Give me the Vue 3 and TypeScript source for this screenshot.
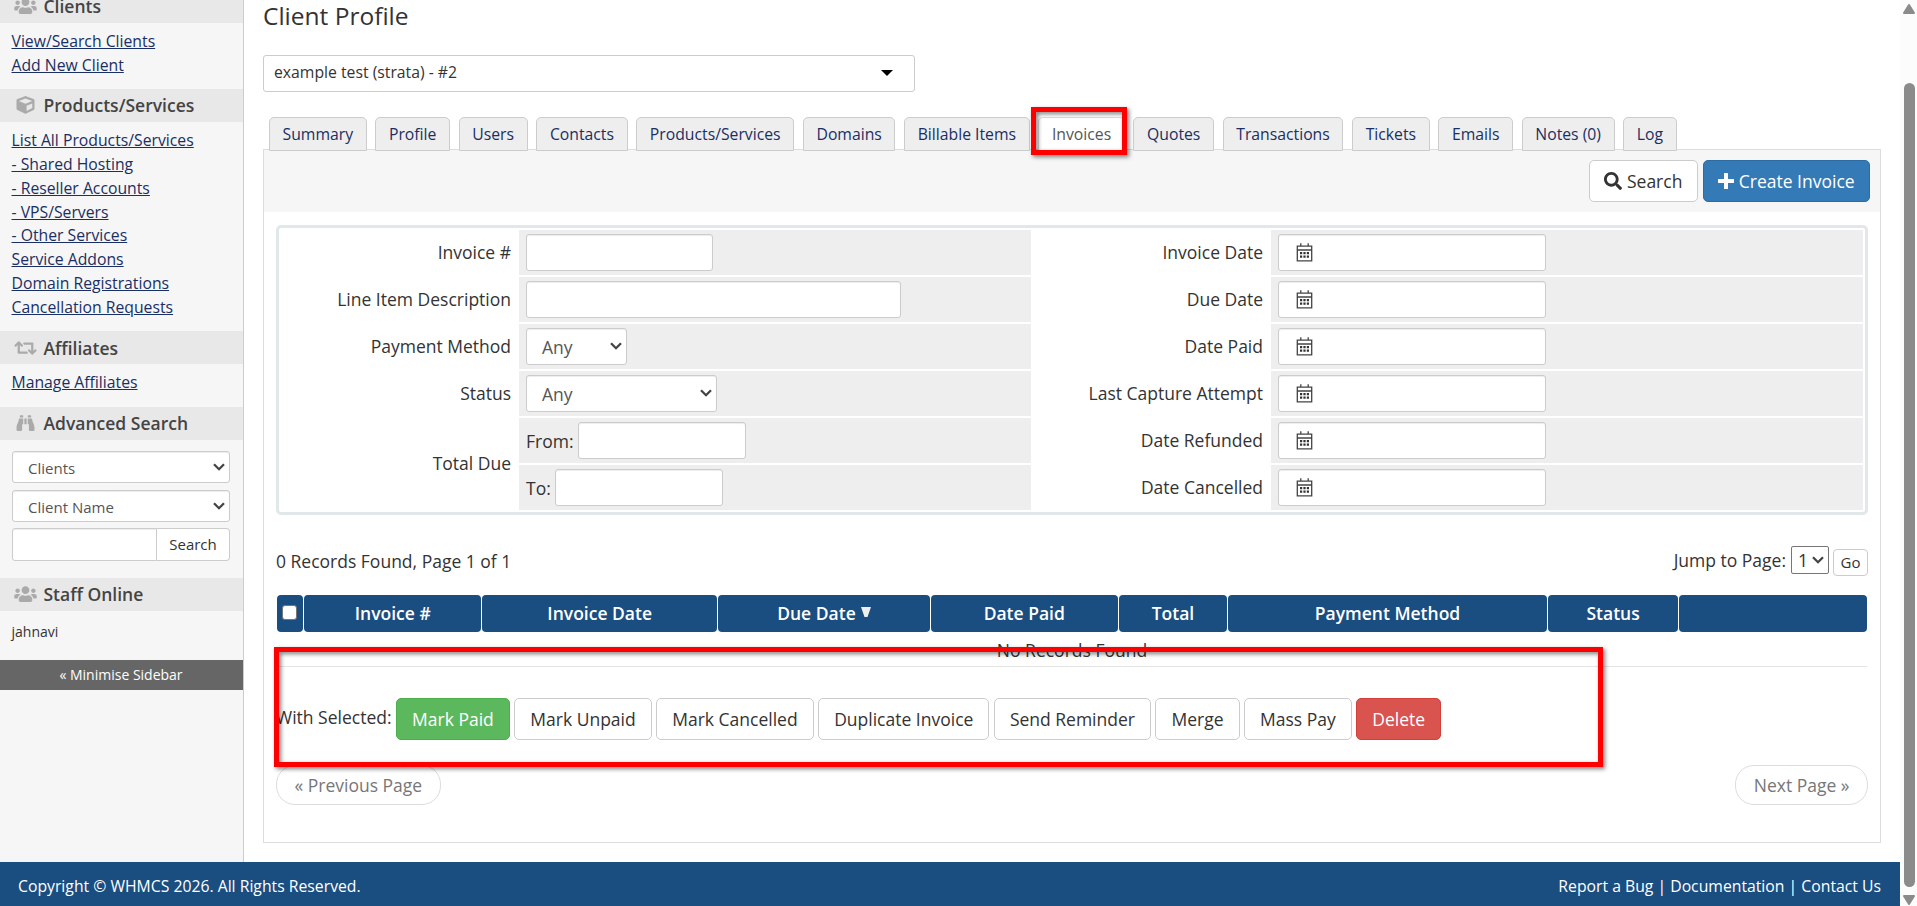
<script setup lang="ts">
interface NavSection {
  title: string
  icon: 'users' | 'cube' | 'retweet' | 'binoculars'
  links: string[]
}

interface Column {
  label: string
  sorted?: boolean
}

interface ActionButton {
  label: string
  kind: 'default' | 'success' | 'danger'
}

const icons: Record<NavSection['icon'], { box: string; d: string }> = {
  users: {
    box: '0 0 640 512',
    d: 'M96 224c35.3 0 64-28.7 64-64s-28.7-64-64-64-64 28.7-64 64 28.7 64 64 64zm448 0c35.3 0 64-28.7 64-64s-28.7-64-64-64-64 28.7-64 64 28.7 64 64 64zm32 32h-64c-17.6 0-33.5 7.1-45.1 18.6 40.3 22.1 68.9 62 75.1 109.4h66c17.7 0 32-14.3 32-32v-32c0-35.3-28.7-64-64-64zm-256 0c61.9 0 112-50.1 112-112S381.9 32 320 32 208 82.1 208 144s50.1 112 112 112zm76.8 32h-8.3c-20.8 10-43.9 16-68.5 16s-47.6-6-68.5-16h-8.3C179.6 288 128 339.6 128 403.2V432c0 26.5 21.5 48 48 48h288c26.5 0 48-21.5 48-48v-28.8c0-63.6-51.6-115.2-115.2-115.2zm-223.7-13.4C161.5 263.1 145.6 256 128 256H64c-35.3 0-64 28.7-64 64v32c0 17.7 14.3 32 32 32h65.9c6.3-47.4 34.9-87.3 75.2-109.4z',
  },
  cube: {
    box: '0 0 512 512',
    d: 'M239.1 6.3l-208 78c-18.7 7-31.1 25-31.1 45v225.1c0 18.2 10.3 34.8 26.5 42.9l208 104c13.5 6.8 29.4 6.8 42.9 0l208-104c16.3-8.1 26.5-24.8 26.5-42.9V129.3c0-20-12.4-37.9-31.1-44.9l-208-78C262 2.2 250 2.2 239.1 6.3zM256 68.4l192 72v1.1l-192 78-192-78v-1.1l192-72zm32 356V275.5l160-65v133.9l-160 80z',
  },
  retweet: {
    box: '0 0 640 512',
    d: 'M629.657 343.598L528.971 444.284c-9.373 9.372-24.568 9.372-33.941 0L394.343 343.598c-9.373-9.373-9.373-24.569 0-33.941l10.823-10.823c9.562-9.562 25.133-9.34 34.419.492L480 342.118V160H292.451a24.005 24.005 0 0 1-16.971-7.029l-16-16C244.361 121.851 255.069 96 276.451 96H520c13.255 0 24 10.745 24 24v222.118l40.416-42.792c9.285-9.831 24.856-10.054 34.419-.492l10.823 10.823c9.372 9.372 9.372 24.569-.001 33.941zm-265.138 15.431A23.999 23.999 0 0 0 347.548 352H160V169.881l40.416 42.792c9.286 9.831 24.856 10.054 34.419.491l10.822-10.822c9.373-9.373 9.373-24.569 0-33.941L144.971 67.716c-9.373-9.373-24.569-9.373-33.941 0L10.343 168.402c-9.373 9.373-9.373 24.569 0 33.941l10.822 10.822c9.562 9.562 25.133 9.34 34.419-.491L96 169.882V392c0 13.255 10.745 24 24 24h243.549c21.382 0 32.09-25.851 16.971-40.971l-16.001-16z',
  },
  binoculars: {
    box: '0 0 512 512',
    d: 'M416 48c0-8.84-7.16-16-16-16h-64c-8.84 0-16 7.16-16 16v48h96V48zM63.91 159.99C61.4 253.84 3.46 274.22 0 404v44c0 17.67 14.33 32 32 32h96c17.67 0 32-14.33 32-32V288h32V128H95.84c-17.63 0-31.45 14.37-31.93 31.99zm384.18 0c-.48-17.62-14.3-31.99-31.93-31.99H320v160h32v160c0 17.67 14.33 32 32 32h96c17.67 0 32-14.33 32-32v-44c-3.46-129.78-61.4-150.16-63.91-244.01zM176 32h-64c-8.84 0-16 7.16-16 16v48h96V48c0-8.84-7.16-16-16-16zm48 256h64V128h-64v160z',
  },
}

const sections: NavSection[] = [
  { title: 'Clients', icon: 'users', links: ['View/Search Clients', 'Add New Client'] },
  {
    title: 'Products/Services',
    icon: 'cube',
    links: [
      'List All Products/Services',
      '- Shared Hosting',
      '- Reseller Accounts',
      '- VPS/Servers',
      '- Other Services',
      'Service Addons',
      'Domain Registrations',
      'Cancellation Requests',
    ],
  },
  { title: 'Affiliates', icon: 'retweet', links: ['Manage Affiliates'] },
]

const tabs: string[] = [
  'Summary', 'Profile', 'Users', 'Contacts', 'Products/Services', 'Domains', 'Billable Items',
  'Invoices', 'Quotes', 'Transactions', 'Tickets', 'Emails', 'Notes (0)', 'Log',
]
const activeTab = 'Invoices'

const dateFilters: string[] = [
  'Invoice Date', 'Due Date', 'Date Paid', 'Last Capture Attempt', 'Date Refunded', 'Date Cancelled',
]

const columns: Column[] = [
  { label: 'Invoice #' },
  { label: 'Invoice Date' },
  { label: 'Due Date', sorted: true },
  { label: 'Date Paid' },
  { label: 'Total' },
  { label: 'Payment Method' },
  { label: 'Status' },
  { label: '' },
]

const actions: ActionButton[] = [
  { label: 'Mark Paid', kind: 'success' },
  { label: 'Mark Unpaid', kind: 'default' },
  { label: 'Mark Cancelled', kind: 'default' },
  { label: 'Duplicate Invoice', kind: 'default' },
  { label: 'Send Reminder', kind: 'default' },
  { label: 'Merge', kind: 'default' },
  { label: 'Mass Pay', kind: 'default' },
  { label: 'Delete', kind: 'danger' },
]
</script>

<template>
  <div class="window">
    <div class="page">
      <div class="body">
        <aside class="sidebar">
          <section v-for="s in sections" :key="s.title">
            <h2 class="side-head">
              <svg class="side-icon" :class="s.icon" :viewBox="icons[s.icon].box"><path :d="icons[s.icon].d" /></svg>
              <span>{{ s.title }}</span>
            </h2>
            <ul class="side-links">
              <li v-for="l in s.links" :key="l"><a href="#">{{ l }}</a></li>
            </ul>
          </section>
          <section class="adv">
            <h2 class="side-head">
              <svg class="side-icon binoculars" :viewBox="icons.binoculars.box"><path :d="icons.binoculars.d" /></svg>
              <span>Advanced Search</span>
            </h2>
            <div class="adv-form">
              <div class="select side-select">
                <span>Clients</span>
                <svg class="chevron" viewBox="0 0 12 8"><path d="M1 1.2 6 6.2 11 1.2" /></svg>
              </div>
              <div class="select side-select">
                <span>Client Name</span>
                <svg class="chevron" viewBox="0 0 12 8"><path d="M1 1.2 6 6.2 11 1.2" /></svg>
              </div>
              <div class="side-search">
                <input type="text" class="side-input" />
                <button type="button">Search</button>
              </div>
            </div>
          </section>
          <section>
            <h2 class="side-head">
              <svg class="side-icon users" :viewBox="icons.users.box"><path :d="icons.users.d" /></svg>
              <span>Staff Online</span>
            </h2>
            <p class="staff">jahnavi</p>
          </section>
          <div class="minimise">« Minimise Sidebar</div>
        </aside>

        <main class="content">
          <h1>Client Profile</h1>
          <div class="client-picker">
            <span>example test (strata) - #2</span>
            <svg viewBox="0 0 12 6"><path d="M0 0h12L6 6z" /></svg>
          </div>

          <nav class="tabs">
            <div v-for="t in tabs" :key="t" class="tab" :class="{ active: t === activeTab }">
              <a>{{ t }}</a>
              <span v-if="t === activeTab" class="marker tab-marker"></span>
            </div>
          </nav>

          <section class="panel">
            <div class="toolbar">
              <button type="button" class="btn search-btn">
                <svg viewBox="0 0 512 512"><path d="M505 442.7L405.3 343c-4.5-4.5-10.6-7-17-7H372c27.6-35.3 44-79.7 44-128C416 93.1 322.9 0 208 0S0 93.1 0 208s93.1 208 208 208c48.3 0 92.7-16.4 128-44v16.3c0 6.4 2.5 12.5 7 17l99.7 99.7c9.4 9.4 24.6 9.4 33.9 0l28.3-28.3c9.4-9.4 9.4-24.6.1-34zM208 336c-70.7 0-128-57.2-128-128 0-70.7 57.2-128 128-128 70.7 0 128 57.2 128 128 0 70.7-57.2 128-128 128z" /></svg>
                <span>Search</span>
              </button>
              <button type="button" class="btn primary create-btn">
                <svg viewBox="0 0 16 16"><path d="M6.6 0h2.8q.6 0 .6.6V6h5.400q.6 0 .6.600v2.800q0 .6-.6.600H10v5.400q0 .6-.6.600H6.600q-.6 0-.6-.6V10H.6q-.6 0-.6-.6V6.600Q0 6 .6 6H6V.6Q6 0 6.600 0z" /></svg>
                <span>Create Invoice</span>
              </button>
            </div>

            <div class="filters">
              <div class="labels">
                <span>Invoice #</span>
                <span>Line Item Description</span>
                <span>Payment Method</span>
                <span>Status</span>
                <span class="tall">Total Due</span>
              </div>
              <div class="fields">
                <div class="cell"><input type="text" class="w-number" /></div>
                <div class="cell"><input type="text" class="w-line" /></div>
                <div class="cell">
                  <div class="select w-method"><span>Any</span><svg class="chevron" viewBox="0 0 12 8"><path d="M1 1.2 6 6.2 11 1.2" /></svg></div>
                </div>
                <div class="cell">
                  <div class="select w-status"><span>Any</span><svg class="chevron" viewBox="0 0 12 8"><path d="M1 1.2 6 6.2 11 1.2" /></svg></div>
                </div>
                <div class="cell"><label>From:</label><input type="text" class="w-amount" /></div>
                <div class="cell"><label>To:</label><input type="text" class="w-amount" /></div>
              </div>
              <div class="labels second">
                <span v-for="d in dateFilters" :key="d">{{ d }}</span>
              </div>
              <div class="fields dates">
                <div v-for="d in dateFilters" :key="d" class="cell">
                  <div class="date-input">
                    <svg viewBox="0 0 17 19">
                      <path class="frame" d="M1.300 3.200h14.400v14.600H1.300zM1.300 7h14.400M4.800 .3v3M12.200 .3v3" />
                      <path class="dots" d="M4 9h2.200v2.200H4zM7.400 9h2.200v2.200H7.400zM10.800 9h2.200v2.200h-2.200zM4 12.600h2.200v2.200H4zM7.400 12.600h2.200v2.200H7.400zM10.800 12.600h2.200v2.200h-2.200z" />
                    </svg>
                  </div>
                </div>
              </div>
            </div>

            <div class="records">
              <span class="count">0 Records Found, Page 1 of 1</span>
              <div class="jump">
                <span>Jump to Page:</span>
                <div class="page-select"><span>1</span><svg class="chevron" viewBox="0 0 12 8"><path d="M1 1.2 6 6.2 11 1.2" /></svg></div>
                <button type="button" class="go">Go</button>
              </div>
            </div>

            <div class="grid-head">
              <div class="th"><span class="check"></span></div>
              <div v-for="(c, i) in columns" :key="i" class="th">
                <span>{{ c.label }}</span>
                <svg v-if="c.sorted" viewBox="0 0 10 10"><path d="M0 0h10L6.500 10h-3z" /></svg>
              </div>
            </div>
            <div class="empty">No Records Found</div>

            <div class="bulk">
              <span class="with">With Selected:</span>
              <button v-for="a in actions" :key="a.label" type="button" class="btn" :class="a.kind">{{ a.label }}</button>
              <span class="marker bulk-marker"></span>
            </div>

            <div class="pager">
              <span>« Previous Page</span>
              <span>Next Page »</span>
            </div>
          </section>
        </main>
      </div>
      <footer class="footer">
        <span>Copyright © WHMCS 2026. All Rights Reserved.</span>
        <span class="foot-links"><a>Report a Bug</a> | <a>Documentation</a> | <a>Contact Us</a></span>
      </footer>
    </div>
    <div class="scrollbar">
      <svg viewBox="0 0 12 10"><path d="M6 1 11 9H1z" /></svg>
      <div class="thumb"></div>
      <svg viewBox="0 0 12 10"><path d="M6 9 1 1h10z" /></svg>
    </div>
  </div>
</template>

<style>
html,
body {
  margin: 0;
  overflow: hidden;
}
</style>

<style scoped>
* {
  box-sizing: border-box;
}
.window {
  display: flex;
  width: 1917px;
  height: 906px;
  overflow: hidden;
  background: #fff;
  color: #333;
  font: 17.5px/25px "Open Sans", "Noto Sans", sans-serif;
  white-space: nowrap;
}
button,
input {
  font-family: inherit;
  margin: 0;
}
input {
  border: 1px solid #ccc;
  border-radius: 3px;
  background: #fff;
  box-shadow: inset 0 1px 1px rgba(0, 0, 0, 0.075);
  outline: none;
}
.page {
  width: 1900px;
  display: flex;
  flex-direction: column;
}
.body {
  display: flex;
  height: 862px;
}

/* Sidebar */
.sidebar {
  width: 244px;
  flex: none;
  background: #f6f6f6;
  border-right: 1px solid #ccc;
  margin-top: -10px;
}
.side-head {
  margin: 0;
  height: 32.5px;
  display: flex;
  align-items: center;
  background: #e8e8e8;
  color: #444;
  font-size: 17.5px;
  font-weight: 600;
  line-height: 32px;
}
.side-icon {
  width: 23px;
  height: 18px;
  margin: 0 6.5px 0 14px;
  fill: #aaa;
}
.side-links {
  list-style: none;
  margin: 0;
  padding: 7.3px 0 11.7px 11.5px;
  font-size: 15.75px;
  line-height: 23.85px;
}
.side-links a {
  color: #1a2f63;
  text-decoration: underline;
}
.select {
  display: flex;
  align-items: center;
  justify-content: space-between;
  border: 1px solid #ccc;
  border-radius: 3px;
  background: #fff;
  color: #555;
  box-shadow: inset 0 1px 1px rgba(0, 0, 0, 0.075);
}
.chevron {
  width: 12px;
  height: 8px;
  fill: none;
  stroke: #444;
  stroke-width: 2.3;
}
.adv .side-head {
  height: 33px;
}
.adv-form {
  padding: 11px 13px 17.5px 12px;
}
.side-select {
  height: 32px;
  margin-bottom: 7px;
  padding: 4px 4px 0 15px;
  font-size: 15px;
}
.side-select + .side-select {
  margin-bottom: 6px;
}
.side-select .chevron,
.w-method .chevron,
.w-status .chevron {
  margin-top: -3px;
}
.side-search {
  display: flex;
}
.side-input {
  width: 145px;
  height: 33px;
  border-radius: 3px 0 0 3px;
}
.side-search button {
  width: 73px;
  height: 33px;
  border: 1px solid #ccc;
  border-left: 0;
  border-radius: 0 4px 4px 0;
  background: #fff;
  color: #333;
  font-size: 15px;
  padding: 0;
}
.staff {
  margin: 0;
  height: 49px;
  padding: 8.5px 0 0 11.5px;
  font-size: 14px;
}
.minimise {
  height: 30px;
  padding-right: 1px;
  background: #666;
  color: #fff;
  text-align: center;
  font-size: 14px;
  line-height: 30px;
}

/* Main column */
.content {
  padding-left: 19px;
  width: 1637px;
  flex: none;
}
h1 {
  margin: 0 0 23px;
  height: 32px;
  font-size: 24.5px;
  font-weight: 400;
  line-height: 32px;
}
.client-picker {
  display: flex;
  align-items: center;
  justify-content: space-between;
  width: 652px;
  height: 37px;
  padding: 0 21px 2px 10px;
  border: 1px solid #ccc;
  border-radius: 3px;
  font-size: 15.75px;
}
.client-picker svg {
  width: 12px;
  height: 6px;
}
.tabs {
  display: flex;
  gap: 8.75px;
  padding-left: 6px;
  margin-top: 25px;
  height: 34px;
  position: relative;
  z-index: 1;
}
.tab {
  position: relative;
  height: 34px;
  padding: 0 12.55px;
  border: 1px solid #ccc;
  border-radius: 5px 5px 0 0;
  background: #eee;
  color: #1a2f63;
  font-size: 15.75px;
  line-height: 33px;
}
.tab.active {
  background: #fff;
  color: #555;
  border-color: #ddd;
}
.marker {
  position: absolute;
  border: 5px solid #f00;
  filter: drop-shadow(2px 2px 2px rgba(0, 0, 0, 0.5));
  pointer-events: none;
}
.tab-marker {
  left: -8px;
  top: -11px;
  width: 96px;
  height: 48px;
}
.panel {
  margin-top: -2px;
  width: 1618px;
  height: 694px;
  border: 1px solid #ddd;
}
.toolbar {
  display: flex;
  justify-content: flex-end;
  gap: 5px;
  height: 62px;
  padding: 10px 10px 0 0;
  background: #f6f6f6;
}
.btn {
  height: 42px;
  padding: 0 15px;
  border: 1px solid #ccc;
  border-radius: 5px;
  background: #fff;
  color: #333;
  font-size: 17.5px;
  line-height: 40px;
}
.toolbar .btn {
  display: flex;
  align-items: center;
  gap: 4.6px;
  padding: 0 14.4px;
}
.search-btn svg {
  width: 18px;
  height: 18px;
  fill: #333;
}
.create-btn svg {
  width: 16px;
  height: 16px;
  fill: #fff;
}
.btn.primary {
  background: #337ab7;
  border-color: #2e6da4;
  color: #fff;
}
.btn.success {
  background: #5cb85c;
  border-color: #4cae4c;
  color: #fff;
}
.btn.danger {
  background: #d9534f;
  border-color: #d43f3a;
  color: #fff;
}

/* Filters */
.filters {
  display: grid;
  grid-template-columns: 240px 512px 240px 592px;
  margin: 13px 12px 0 12px;
  width: 1592px;
  height: 290px;
  padding-top: 2px;
  border: 3px solid #e2e7e9;
  border-radius: 5px;
}
.labels,
.fields {
  display: flex;
  flex-direction: column;
  gap: 2px;
}
.labels span {
  height: 45px;
  padding-right: 8px;
  text-align: right;
  line-height: 45px;
}
.labels .tall {
  height: 92px;
  line-height: 91px;
}
.cell {
  display: flex;
  align-items: center;
  height: 45px;
  padding: 0 0 0 7px;
  background: #eee;
}
.cell input,
.cell .select,
.date-input {
  height: 37px;
}
.cell label {
  margin-right: 4.3px;
  padding-top: 2px;
}
.cell .select {
  padding: 2px 4px 0 15px;
}
.w-number { width: 187px; }
.w-line { width: 375px; }
.w-method { width: 101px; }
.w-status { width: 191px; }
.w-amount { width: 168px; }
.date-input {
  display: flex;
  align-items: center;
  width: 268px;
  padding: 0 0 1px 17px;
  border: 1px solid #ccc;
  border-radius: 3px;
  background: #fff;
  box-shadow: inset 0 1px 1px rgba(0, 0, 0, 0.075);
}
.date-input svg {
  width: 17px;
  height: 19px;
}
.frame {
  fill: none;
  stroke: #444;
  stroke-width: 1.3;
}
.dots {
  fill: #333;
}

/* Records */
.records {
  display: flex;
  justify-content: space-between;
  height: 80px;
  padding: 0 12px;
}
.count {
  padding-top: 34px;
}
.jump {
  display: flex;
  padding-top: 31px;
}
.jump > span {
  line-height: 28px;
}
.page-select {
  display: flex;
  align-items: center;
  justify-content: space-between;
  width: 38px;
  height: 28px;
  margin: 0 4px 0 5px;
  padding: 0 4px 0 6px;
  border: 1px solid #767676;
  border-radius: 2px;
}
.go {
  width: 35px;
  height: 27px;
  margin-top: 3px;
  padding: 0 0 2px;
  border: 1px solid #ccc;
  border-radius: 4px;
  background: #fff;
  color: #333;
  font-size: 15px;
}
.grid-head {
  display: grid;
  grid-template-columns: 26.3px 176.5px 235px 211.2px 187px 108px 318.8px 130px 188px;
  gap: 1.2px;
  margin-left: 13px;
  height: 37px;
}
.th {
  display: flex;
  align-items: center;
  justify-content: center;
  gap: 5px;
  border-radius: 4px;
  background: #1a4d80;
  color: #fff;
  font-weight: 600;
}
.th svg {
  width: 10px;
  height: 10px;
  margin-top: -3px;
  fill: #eee;
}
.check {
  width: 15px;
  height: 15px;
  border: 1px solid #767676;
  border-radius: 3px;
  background: #fff;
  margin: -2px 1.5px 0 0;
}
.empty {
  height: 35px;
  margin: 0 13px;
  border-bottom: 1px solid #e5e5e5;
  text-align: center;
  line-height: 37px;
}
.bulk {
  position: relative;
  display: flex;
  gap: 4.52px;
  height: 98px;
  padding: 31px 0 0 12px;
}
.with {
  line-height: 39px;
}
.bulk-marker {
  left: 10px;
  top: -20px;
  width: 1329px;
  height: 120px;
}
.pager {
  display: flex;
  justify-content: space-between;
  padding: 0 12px;
}
.pager span {
  height: 40px;
  padding: 0 17.5px;
  border: 1px solid #ddd;
  border-radius: 19px;
  color: #777;
  line-height: 38px;
}
.footer {
  display: flex;
  justify-content: space-between;
  height: 44px;
  padding: 0 19px 0 18px;
  background: #1a4d80;
  color: #fff;
  font-size: 15.75px;
  line-height: 48px;
}
.scrollbar {
  width: 17px;
  display: flex;
  flex-direction: column;
  align-items: center;
  padding-top: 4px;
  background: #fcfcfc;
}
.scrollbar svg {
  width: 12px;
  height: 10px;
  fill: #8b8b8b;
  stroke: #8b8b8b;
  stroke-width: 2;
  stroke-linejoin: round;
}
.thumb {
  width: 11px;
  height: 804px;
  margin: 69px 0 8px 2px;
  border-radius: 6px;
  background: #8b8b8b;
}
</style>
